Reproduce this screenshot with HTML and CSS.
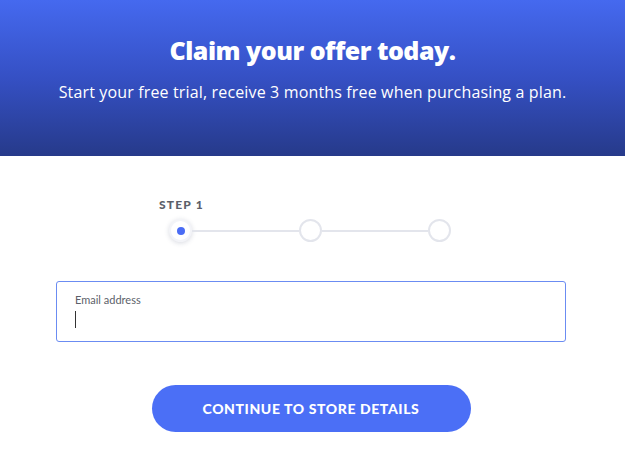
FILE: index.html
```html
<!DOCTYPE html>
<html lang="en">
<head>
  <meta charset="UTF-8">
  <title>Claim your offer</title>
  <link rel="stylesheet" href="styles.css">
</head>
<body>
<div class="hero">
  <h1 class="hero-title">Claim your offer today.</h1>
  <p class="hero-sub">Start your free trial, receive 3 months free when purchasing a plan.</p>
</div>
<div class="main">
  <div class="stepper">
    <div class="step-label">STEP 1</div>
    <div class="steps">
      <span class="dot active"></span>
      <span class="line"></span>
      <span class="dot"></span>
      <span class="line"></span>
      <span class="dot"></span>
    </div>
  </div>
  <label class="field">
    <span class="field-label">Email address</span>
    <span class="caret"></span>
  </label>
  <button class="btn">CONTINUE TO STORE DETAILS</button>
</div>
</body>
</html>
```

FILE: styles.css
```css
* {
  box-sizing: border-box;
}

html,
body {
  margin: 0;
  padding: 0;
}

body {
  font-family: Lato, "Open Sans", sans-serif;
  color: #333;
  background: #fff;
}

.hero {
  height: 156px;
  padding-top: 33px;
  text-align: center;
  color: #fff;
  background: linear-gradient(180deg, #4569ef 0%, #3550c4 50%, #263a8a 100%);
}

.hero-title {
  margin: 0;
  font-family: "Open Sans", sans-serif;
  font-weight: 800;
  font-size: 25px;
  line-height: 34px;
  letter-spacing: -0.5px;
}

.hero-sub {
  margin: 15px 0 0;
  font-family: "Open Sans", sans-serif;
  font-size: 16px;
  line-height: 21px;
  letter-spacing: 0.15px;
}

.main {
  width: 510px;
  margin-left: 56px;
  padding-top: 42px;
}

.stepper {
  width: 302px;
  margin-left: 103px;
}

.step-label {
  font-size: 12px;
  font-weight: 900;
  letter-spacing: 1.2px;
  color: #5c5f6a;
  line-height: 14px;
}

.steps {
  display: flex;
  align-items: center;
  margin-top: 7px;
  padding: 0 10px;
}

.dot {
  width: 23px;
  height: 23px;
  border-radius: 50%;
  border: 2px solid #e3e5ec;
  background: #fff;
  display: flex;
  align-items: center;
  justify-content: center;
  flex: none;
}

.dot.active {
  border-color: #f3f4f8;
  box-shadow: 0 1px 5px rgba(40, 50, 90, 0.18);
}

.dot.active::after {
  content: "";
  width: 8px;
  height: 8px;
  border-radius: 50%;
  background: #4a6cf5;
}

.line {
  flex: 1;
  height: 2px;
  background: #e3e5ec;
}

.field {
  display: block;
  margin-top: 39px;
  height: 61px;
  border: 1px solid #6b8cf2;
  border-radius: 3px;
  padding: 11px 18px;
}

.field-label {
  display: block;
  font-size: 11px;
  line-height: 14px;
  color: #5c5f6a;
}

.caret {
  display: block;
  width: 1px;
  height: 17px;
  margin-top: 4px;
  background: #333;
}

.btn {
  display: block;
  width: 319px;
  height: 47px;
  margin: 43px auto 0;
  border: none;
  border-radius: 24px;
  background: #4b6ff6;
  color: #fff;
  font-family: Lato, sans-serif;
  font-weight: 900;
  font-size: 14px;
  letter-spacing: 0.6px;
  cursor: pointer;
}
```
